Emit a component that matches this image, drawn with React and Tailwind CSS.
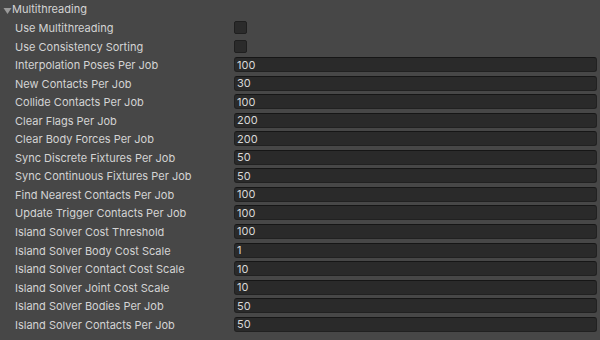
import React from "react";

const rows = [
  ["Use Multithreading", null],
  ["Use Consistency Sorting", null],
  ["Interpolation Poses Per Job", "100"],
  ["New Contacts Per Job", "30"],
  ["Collide Contacts Per Job", "100"],
  ["Clear Flags Per Job", "200"],
  ["Clear Body Forces Per Job", "200"],
  ["Sync Discrete Fixtures Per Job", "50"],
  ["Sync Continuous Fixtures Per Job", "50"],
  ["Find Nearest Contacts Per Job", "100"],
  ["Update Trigger Contacts Per Job", "100"],
  ["Island Solver Cost Threshold", "100"],
  ["Island Solver Body Cost Scale", "1"],
  ["Island Solver Contact Cost Scale", "10"],
  ["Island Solver Joint Cost Scale", "10"],
  ["Island Solver Bodies Per Job", "50"],
  ["Island Solver Contacts Per Job", "50"],
];

export default function App() {
  return (
    <div
      className="w-[600px] h-[340px] overflow-hidden bg-[#474747] text-[#d4d4d4] text-[11px] leading-none"
      style={{ fontFamily: "Inter, 'Noto Sans', sans-serif" }}
    >
      <div className="h-[18.2px] flex items-center pl-[3px] pt-[1px]">
        <svg width="9" height="8" viewBox="0 0 9 8" className="mr-0">
          <path d="M0.5 2 L8.5 2 L4.5 8 Z" fill="#9a9a9a" />
        </svg>
        <span>Multithreading</span>
      </div>
      {rows.map(([label, value]) => (
        <div key={label} className="h-[18.55px] flex items-center pl-[15px] pr-[3px]">
          <div className="w-[219px] shrink-0 pt-[2px]">{label}</div>
          {value === null ? (
            <div className="w-[13px] h-[13px] rounded-[2px] bg-[#2b2b2b] border border-[#1f1f1f]" />
          ) : (
            <div className="flex-1 h-[15px] rounded-[3px] bg-[#2a2a2a] border border-[#212121] border-t-[#161616] flex items-center pl-[2px] pt-[1px] text-[#d8d8d8]">
              {value}
            </div>
          )}
        </div>
      ))}
    </div>
  );
}
